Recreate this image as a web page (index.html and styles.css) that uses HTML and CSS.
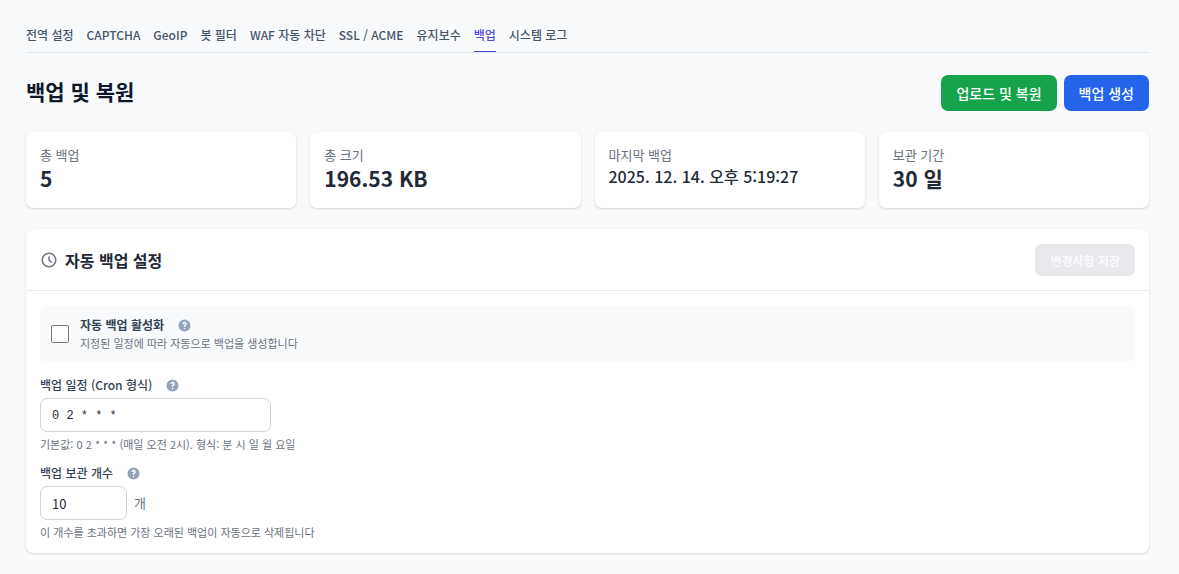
FILE: index.html
```html
<!DOCTYPE html>
<html lang="ko">
<head>
    <meta charset="UTF-8">
    <meta name="viewport" content="width=device-width, initial-scale=1.0">
    <title>백업 및 복원</title>
    <link rel="stylesheet" href="styles.css">
</head>
<body>
    <nav class="tabs">
        <a href="#">전역 설정</a>
        <a href="#">CAPTCHA</a>
        <a href="#">GeoIP</a>
        <a href="#">봇 필터</a>
        <a href="#">WAF 자동 차단</a>
        <a href="#">SSL / ACME</a>
        <a href="#">유지보수</a>
        <a href="#" class="active">백업</a>
        <a href="#">시스템 로그</a>
    </nav>

    <main>
        <div class="page-head">
            <h1>백업 및 복원</h1>
            <div class="actions">
                <button type="button" class="btn btn-green">업로드 및 복원</button>
                <button type="button" class="btn btn-blue">백업 생성</button>
            </div>
        </div>

        <div class="stats">
            <div class="stat">
                <div class="stat-label">총 백업</div>
                <div class="stat-value">5</div>
            </div>
            <div class="stat">
                <div class="stat-label">총 크기</div>
                <div class="stat-value">196.53 KB</div>
            </div>
            <div class="stat">
                <div class="stat-label">마지막 백업</div>
                <div class="stat-date">2025. 12. 14. 오후 5:19:27</div>
            </div>
            <div class="stat">
                <div class="stat-label">보관 기간</div>
                <div class="stat-value">30 일</div>
            </div>
        </div>

        <section class="panel">
            <div class="panel-head">
                <h2>
                    <svg class="clock" viewBox="0 0 24 24" fill="none" stroke="currentColor" stroke-width="2" stroke-linecap="round" stroke-linejoin="round">
                        <path d="M12 8v4l3 3m6-3a9 9 0 11-18 0 9 9 0 0118 0z"/>
                    </svg>
                    자동 백업 설정
                </h2>
                <button type="button" class="btn-save" disabled>변경사항 저장</button>
            </div>

            <div class="panel-body">
                <div class="toggle">
                    <input type="checkbox" id="autoBackup">
                    <div>
                        <div class="label-row">
                            <label for="autoBackup">자동 백업 활성화</label>
                            <svg class="help" viewBox="0 0 20 20" fill="currentColor">
                                <path fill-rule="evenodd" d="M18 10a8 8 0 11-16 0 8 8 0 0116 0zm-8-3a1 1 0 00-.867.5 1 1 0 11-1.731-1A3 3 0 0113 8a3.001 3.001 0 01-2 2.83V11a1 1 0 11-2 0v-1a1 1 0 011-1 1 1 0 100-2zm0 8a1 1 0 100-2 1 1 0 000 2z" clip-rule="evenodd"/>
                            </svg>
                        </div>
                        <p class="hint">지정된 일정에 따라 자동으로 백업을 생성합니다</p>
                    </div>
                </div>

                <div class="field">
                    <div class="label-row">
                        <label for="cron">백업 일정 (Cron 형식)</label>
                        <svg class="help" viewBox="0 0 20 20" fill="currentColor">
                            <path fill-rule="evenodd" d="M18 10a8 8 0 11-16 0 8 8 0 0116 0zm-8-3a1 1 0 00-.867.5 1 1 0 11-1.731-1A3 3 0 0113 8a3.001 3.001 0 01-2 2.83V11a1 1 0 11-2 0v-1a1 1 0 011-1 1 1 0 100-2zm0 8a1 1 0 100-2 1 1 0 000 2z" clip-rule="evenodd"/>
                        </svg>
                    </div>
                    <input type="text" id="cron" class="input mono" value="0 2 * * *">
                    <p class="hint">기본값: 0 2 * * * (매일 오전 2시). 형식: 분 시 일 월 요일</p>
                </div>

                <div class="field">
                    <div class="label-row">
                        <label for="keep">백업 보관 개수</label>
                        <svg class="help" viewBox="0 0 20 20" fill="currentColor">
                            <path fill-rule="evenodd" d="M18 10a8 8 0 11-16 0 8 8 0 0116 0zm-8-3a1 1 0 00-.867.5 1 1 0 11-1.731-1A3 3 0 0113 8a3.001 3.001 0 01-2 2.83V11a1 1 0 11-2 0v-1a1 1 0 011-1 1 1 0 100-2zm0 8a1 1 0 100-2 1 1 0 000 2z" clip-rule="evenodd"/>
                        </svg>
                    </div>
                    <div class="input-row">
                        <input type="number" id="keep" class="input short" value="10">
                        <span class="unit">개</span>
                    </div>
                    <p class="hint">이 개수를 초과하면 가장 오래된 백업이 자동으로 삭제됩니다</p>
                </div>
            </div>
        </section>
    </main>
</body>
</html>
```

FILE: styles.css
```css
* {
    box-sizing: border-box;
    margin: 0;
    padding: 0;
}

body {
    padding: 24px 30px 20px 26px;
    background: #f8fafc;
    color: #1f2937;
    font-family: "Noto Sans CJK KR", sans-serif;
    font-size: 13px;
    line-height: 18px;
}

button,
input {
    font-family: inherit;
}

/* tabs */
.tabs {
    display: flex;
    gap: 13px;
    border-bottom: 1px solid #e2e8f0;
}

.tabs a {
    padding: 2px 0 7px;
    border-bottom: 1px solid transparent;
    color: #475569;
    font-size: 12px;
    font-weight: 500;
    text-decoration: none;
    white-space: nowrap;
}

.tabs a.active {
    color: #4f46e5;
    border-bottom-color: #4f46e5;
}

/* page header */
.page-head {
    display: flex;
    align-items: center;
    justify-content: space-between;
    margin: 22px 0 21px;
}

h1 {
    padding-bottom: 4px;
    color: #0f172a;
    font-size: 21px;
    line-height: 32px;
    font-weight: 700;
}

.actions {
    display: flex;
    gap: 7px;
}

.btn {
    height: 36px;
    padding: 0 15px;
    border: 0;
    border-radius: 7px;
    color: #fff;
    font-size: 14px;
    font-weight: 500;
}

.btn-green {
    background: #16a34a;
}

.btn-blue {
    background: #2563eb;
}

/* stat cards */
.stats {
    display: grid;
    grid-template-columns: repeat(4, 1fr);
    gap: 14px;
}

.stat,
.panel {
    background: #fff;
    border-radius: 7px;
    box-shadow: 0 1px 3px rgba(0, 0, 0, 0.1), 0 1px 2px rgba(0, 0, 0, 0.06);
}

.stat {
    padding: 14px 14px 15px;
}

.stat-label {
    color: #6b7280;
}

.stat-value {
    font-size: 21px;
    line-height: 29px;
    font-weight: 700;
}

.stat-date {
    font-size: 16px;
    line-height: 25px;
    font-weight: 500;
}

/* settings panel */
.panel {
    margin-top: 21px;
}

.panel-head {
    display: flex;
    align-items: center;
    justify-content: space-between;
    padding: 15px 14px 14px;
    border-bottom: 1px solid #e5e7eb;
}

h2 {
    display: flex;
    align-items: center;
    gap: 7px;
    padding-bottom: 1px;
    font-size: 16px;
    line-height: 24px;
    font-weight: 600;
}

.clock {
    width: 18px;
    height: 18px;
    color: #6b7280;
}

.btn-save {
    height: 32px;
    padding: 0 15px;
    border: 0;
    border-radius: 7px;
    background: #e8e9ed;
    color: #fafafb;
    font-size: 12px;
    font-weight: 700;
}

.panel-body {
    padding: 15px 14px 12px;
}

.toggle {
    display: flex;
    align-items: center;
    gap: 11px;
    padding: 10px 11px;
    background: #f8fafc;
    border-radius: 7px;
}

.toggle input {
    appearance: none;
    width: 18px;
    height: 18px;
    border: 1px solid #767676;
    border-radius: 2px;
    background: #fff;
}

.toggle input:checked {
    background: #2563eb;
}

.label-row {
    display: flex;
    align-items: center;
    gap: 13px;
}

.label-row label {
    color: #334155;
    font-size: 12px;
    font-weight: 500;
}

.toggle label {
    font-weight: 700;
}

.help {
    width: 15px;
    height: 15px;
    color: #94a3b8;
}

.hint {
    color: #6b7280;
    font-size: 11px;
    line-height: 18px;
}

.field {
    margin-top: 14px;
}

.field + .field {
    margin-top: 11px;
}

.input {
    display: block;
    width: 231px;
    height: 34px;
    margin: 4px 0 3px;
    padding: 0 11px;
    border: 1px solid #d1d5db;
    border-radius: 7px;
    background: #fff;
    color: #1f2937;
    font-size: 13px;
}

.input.mono {
    padding-top: 2px;
    font-family: "Liberation Mono", monospace;
    font-size: 12px;
}

.input.short {
    width: 87px;
}

.input-row {
    display: flex;
    align-items: center;
    gap: 7px;
}

.unit {
    color: #6b7280;
}
```
